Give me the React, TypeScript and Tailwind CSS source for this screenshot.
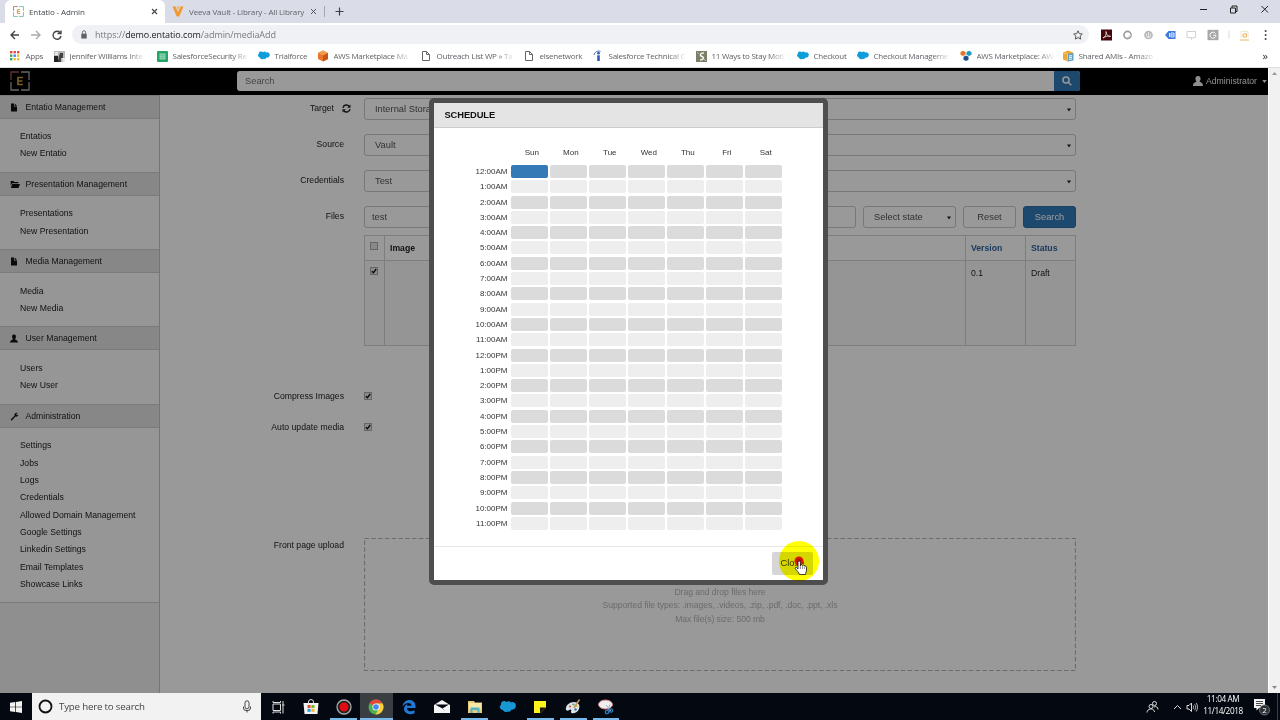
import type { ReactNode } from 'react';
import clsx from 'clsx';

interface MenuGroup {
  title: string;
  icon: 'file' | 'folder' | 'user' | 'wrench';
  items: string[];
}

interface Bookmark {
  label: string;
  width: string;
  icon: ReactNode;
  fade?: boolean;
}

const menu: MenuGroup[] = [
  { title: 'Entatio Management', icon: 'file', items: ['Entatios', 'New Entatio'] },
  { title: 'Presentation Management', icon: 'folder', items: ['Presentations', 'New Presentation'] },
  { title: 'Media Management', icon: 'file', items: ['Media', 'New Media'] },
  { title: 'User Management', icon: 'user', items: ['Users', 'New User'] },
  {
    title: 'Administration',
    icon: 'wrench',
    items: [
      'Settings',
      'Jobs',
      'Logs',
      'Credentials',
      'Allowed Domain Management',
      'Google Settings',
      'Linkedin Settings',
      'Email Templates',
      'Showcase Links',
    ],
  },
];

const days = ['Sun', 'Mon', 'Tue', 'Wed', 'Thu', 'Fri', 'Sat'];
const hours = Array.from({ length: 24 }, (_, h) => `${h % 12 || 12}:00${h < 12 ? 'AM' : 'PM'}`);

const SalesforceCloud = () => (
  <svg viewBox="0 0 16 12" className="-mt-0.5 h-[9px] w-3">
    <path d="M6.5 1.6A3.3 3.3 0 0 1 11 2a3.4 3.4 0 0 1 4.7 3.3A3.4 3.4 0 0 1 11.5 8.7 3 3 0 0 1 7.6 10.3 3.6 3.6 0 0 1 2.5 8.5 2.8 2.8 0 0 1 1 3.7 3.2 3.2 0 0 1 6.5 1.6Z" fill="#0d9dda" />
  </svg>
);

const PageIcon = () => (
  <svg viewBox="0 0 12 12" className="size-3" fill="none" stroke="#666" strokeWidth="1">
    <path d="M2.5 1.5H6.5L9.5 4.5V10.5H2.5ZM6.5 1.5V4.5H9.5" />
  </svg>
);

const AppsIcon = () => (
  <svg viewBox="0 0 10 10" className="size-[10px]">
    {['#e8453c', '#e8453c', '#e8453c', '#3aa757', '#4285f4', '#f9bb2d', '#3aa757', '#f9bb2d', '#f9bb2d'].map((c, i) => (
      <rect key={i} x={(i % 3) * 3.5} y={Math.floor(i / 3) * 3.5} width="2.4" height="2.4" fill={c} />
    ))}
  </svg>
);

const PhotoIcon = () => (
  <svg viewBox="0 0 11 11" className="size-[11px]">
    <path d="M0 0H11V11H0Z" fill="#b9b9b9" />
    <path d="M0 5H4L5 11H0Z" fill="#222" />
    <path d="M6 2H9V7H7V11H5V5Z" fill="#444" />
    <path d="M1 1H4V4H1ZM8 7H11V11H9Z" fill="#e8e8e8" />
  </svg>
);

const SheetIcon = () => (
  <svg viewBox="0 0 11 11" className="size-[11px]">
    <rect width="11" height="11" rx="1" fill="#23a566" />
    <path d="M2.5 2.5H8.5V8.5H2.5Z" fill="#8ed1b1" />
    <path d="M2.5 4.5H8.5M2.5 6.5H8.5M5.5 2.5V8.5" stroke="#58b98b" strokeWidth=".5" />
  </svg>
);

const AwsCubeIcon = () => (
  <svg viewBox="0 0 12 12" className="size-3">
    <path d="M6 .5L11 3V9L6 11.5 1 9V3Z" fill="#e8762c" />
    <path d="M6 .5L11 3 6 5.5 1 3Z" fill="#f49a4b" />
    <path d="M6 5.5L11 3V9L6 11.5Z" fill="#c85515" />
  </svg>
);

const IndeedIcon = () => (
  <svg viewBox="0 0 12 12" className="size-3">
    <circle cx="6.5" cy="3.2" r="1.4" fill="#2f5bb5" />
    <path d="M5.2 5.3H7.8V11H5.2Z" fill="#2f5bb5" />
    <path d="M2 5C3 1.5 6 .3 8.5 1.5" stroke="#2f5bb5" fill="none" strokeWidth=".9" />
  </svg>
);

const LeafIcon = () => (
  <svg viewBox="0 0 11 11" className="size-[11px]">
    <rect width="11" height="11" fill="#7c8069" />
    <path d="M8 2C4 1.5 3.5 4.5 6 5.5S7.5 9 4 9" stroke="#f4f4ee" strokeWidth="1.5" fill="none" />
    <path d="M1 1L3 3M8 8L10 10" stroke="#c8c8bc" strokeWidth=".8" />
  </svg>
);

const MarketIcon = () => (
  <svg viewBox="0 0 12 12" className="size-3">
    <path d="M3 .8L5.5 2V4.8L3 6 .5 4.8V2Z" fill="#e47427" />
    <path d="M9 .8L11.5 2V4.8L9 6 6.5 4.8V2Z" fill="#1c9ac0" />
    <path d="M6 5.5L8.5 6.8V9.7L6 11 3.5 9.7V6.8Z" fill="#1c4f8c" />
  </svg>
);

const AmiIcon = () => (
  <svg viewBox="0 0 12 12" className="size-3">
    <path d="M1 2.5L6 .5 11 2.5V9.5L6 11.5 1 9.5Z" fill="#f0a733" />
    <path d="M5.5 4L11.5 3V10.5L5.5 11.5Z" fill="#5ea0c8" />
    <path d="M7 6L10 5.6M7 7.5L10 7.2M7 9.3L10 9" stroke="#fff" strokeWidth=".9" />
    <path d="M1 2.5L5.5 4V11.2" stroke="#f9d48b" strokeWidth=".7" fill="none" />
  </svg>
);

const bookmarks: Bookmark[] = [
  { label: 'Apps', width: 'w-11', icon: <AppsIcon /> },
  { label: 'Jennifer Williams Inte', width: 'w-[103px]', icon: <PhotoIcon />, fade: true },
  { label: 'SalesforceSecurity Re', width: 'w-[102px]', icon: <SheetIcon />, fade: true },
  { label: 'Trialforce', width: 'w-[59px]', icon: <SalesforceCloud /> },
  { label: 'AWS Marketplace Ma', width: 'w-[103px]', icon: <AwsCubeIcon />, fade: true },
  { label: 'Outreach List WP » Ta', width: 'w-[103px]', icon: <PageIcon />, fade: true },
  { label: 'elsenetwork', width: 'w-[69px]', icon: <PageIcon /> },
  { label: 'Salesforce Technical C', width: 'w-[103px]', icon: <IndeedIcon />, fade: true },
  { label: '11 Ways to Stay Moti', width: 'w-[102px]', icon: <LeafIcon />, fade: true },
  { label: 'Checkout', width: 'w-[60px]', icon: <SalesforceCloud /> },
  { label: 'Checkout Manageme', width: 'w-[103px]', icon: <SalesforceCloud />, fade: true },
  { label: 'AWS Marketplace: AW', width: 'w-[102px]', icon: <MarketIcon />, fade: true },
  { label: 'Shared AMIs - Amazo', width: 'w-[103px]', icon: <AmiIcon />, fade: true },
];

function EntatioMark({ className, corner }: { className: string; corner: string }) {
  return (
    <svg viewBox="0 0 20 20" className={className} fill="none" strokeWidth="1.3">
      <path d="M1 9V1H9" stroke="#9c5a4c" />
      <path d="M11 1H19V9M19 11V19H11M9 19H1V11" stroke={corner} />
      <path d="M13 6.5H8V13.5H13M8 10H12.5" stroke="#c99a3a" strokeWidth="1.7" />
    </svg>
  );
}

function BrowserChrome() {
  return (
    <header className="h-[68px] shrink-0 bg-white font-['Open_Sans',sans-serif] text-[8px] text-[#5f6368]">
      <div className="flex h-[23px] items-stretch bg-[#dadde8] pl-[5px]">
        <div className="flex w-40 items-center rounded-t-md bg-white pl-2 pr-[7px]">
          <EntatioMark className="size-[11px]" corner="#58aaa0" />
          <span className="ml-[5px] grow tracking-[-0.1px] text-[#45494d]">Entatio - Admin</span>
          <svg viewBox="0 0 7 7" className="size-[7px]" stroke="#444" strokeWidth="1.1">
            <path d="M1 1L6 6M6 1L1 6" />
          </svg>
        </div>
        <div className="my-[6px] flex w-40 items-center border-r border-[#a3a7b0] pl-[7px] pr-[7px]">
          <svg viewBox="0 0 12 11" className="h-[11px] w-3 shrink-0">
            <path d="M.5.5H3.5L6 6 8.5.5H11.5L7.3 10.5H4.7Z" fill="#f09a35" />
            <path d="M4.5.5H7.5L6 4Z" fill="#f6b25c" />
          </svg>
          <span className="ml-[5px] grow whitespace-nowrap tracking-[-0.14px]">Veeva Vault - Library - All Library</span>
          <svg viewBox="0 0 7 7" className="size-[7px] shrink-0" stroke="#555" strokeWidth="1">
            <path d="M1 1L6 6M6 1L1 6" />
          </svg>
        </div>
        <svg viewBox="0 0 9 9" className="ml-[10px] mt-[7px] size-[9px]" stroke="#3c4043" strokeWidth="1.2">
          <path d="M4.5.5V8.5M.5 4.5H8.5" />
        </svg>
        <div className="ml-auto flex items-start pt-[5px]">
          <svg viewBox="0 0 76 10" className="mr-[7px] h-[10px] w-[76px]" fill="none" stroke="#222" strokeWidth="1">
            <path d="M3 4.5H10" />
            <path d="M34.5 3.5H39.5V8.5H34.5ZM36 3.5V1.5H41V7H39.5" transform="translate(-1 -.5)" />
            <path d="M64.5 1L71 7.5M71 1L64.5 7.5" />
          </svg>
        </div>
      </div>
      <div className="flex h-[22px] items-center pt-px">
        <svg viewBox="0 0 52 12" className="ml-[10px] h-3 w-[52px]" fill="none" strokeWidth="1.4">
          <path d="M9 6H1M5 2L1 6 5 10" stroke="#444" />
          <path d="M21 6H30M26 2L30 6 26 10" stroke="#aaa" />
          <path d="M50 3.5A4 4 0 1 0 51 7M51 1.5V4.5H47.5" stroke="#444" />
        </svg>
        <div className="ml-[10px] flex h-[19px] w-[1017px] items-center rounded-full bg-[#f0f1f4] pl-2">
          <svg viewBox="0 0 8 10" className="h-[9px] w-2">
            <path d="M1 4H7V9.5H1Z" fill="#5f6368" />
            <path d="M2.300 4V2.5a1.7 1.7 0 0 1 3.4 0V4" fill="none" stroke="#5f6368" />
          </svg>
          <span className="ml-[7px] text-[9px] tracking-[-0.07px] text-[#767a7f]">
            https://<span className="text-[#202124]">demo.entatio.com</span>/admin/mediaAdd
          </span>
          <svg viewBox="0 0 10 10" className="ml-auto mr-[6px] size-[10px]" fill="none" stroke="#555" strokeWidth="1">
            <path d="M5 .8L6.3 3.6 9.3 4 7.1 6.1 7.7 9.1 5 7.6 2.3 9.1 2.9 6.1.7 4 3.7 3.6Z" />
          </svg>
        </div>
        <svg viewBox="0 0 180 12" className="ml-2 h-3 w-[180px] shrink-0">
          <path d="M4 .5H15V11.5H4Z" fill="#45080c" />
          <path d="M6 9C8.5 8 9.5 5 9 2.500 9.5 6 11 7.5 13.5 7.3 11 6.8 8 7.5 6 9Z" fill="none" stroke="#eee" strokeWidth=".8" />
          <circle cx="30.5" cy="6" r="3.6" fill="none" stroke="#9a9a9a" strokeWidth="1.6" />
          <path d="M31 8L34 6" stroke="#ddd" strokeWidth="1.5" />
          <circle cx="51.5" cy="6" r="4.3" fill="#b8b8b8" />
          <path d="M49.5 4.5V6.5a2 2 0 0 0 4 0V4.5M51.5 3V9" stroke="#f4f4f4" fill="none" strokeWidth=".8" />
          <path d="M68 6L71.5 2H78.5V10H71.5Z" fill="#3f79dd" />
          <path d="M72.5 4V8M74 4H77V8H74ZM74 6H77" stroke="#fff" strokeWidth=".8" fill="none" />
          <path d="M90 2.5H98.5V8.5H96L94.5 10.5V8.5H90Z" fill="none" stroke="#d2d2d6" />
          <path d="M110.5.8H121.5V11.2H110.5Z" fill="#a8a8a8" />
          <path d="M118.500 4.5A3 3 0 1 0 118.8 7.3V6.2H116.3" fill="none" stroke="#fff" />
          <path d="M132 2V10" stroke="#ddd" />
          <path d="M144 9V2.5H151V9" fill="none" stroke="#f2e7d2" />
          <path d="M143 11H152M146 5H149.5V8H146Z" stroke="#edb765" fill="none" />
          <circle cx="168.6" cy="2" r="1" fill="#444" />
          <circle cx="168.6" cy="6" r="1" fill="#444" />
          <circle cx="168.6" cy="10" r="1" fill="#444" />
        </svg>
      </div>
      <div className="flex h-[23px] items-center border-b border-[#ddd] pl-[8.500px]">
        {bookmarks.map((b) => (
          <div key={b.label} className={clsx('flex shrink-0 items-center', b.width)}>
            <span className="flex w-[13px] shrink-0 justify-center">{b.icon}</span>
            <span
              className={clsx(
                'ml-1 whitespace-nowrap tracking-[-0.25px]',
                b.fade && '[mask-image:linear-gradient(to_right,black_80%,rgba(0,0,0,0.15))]',
              )}
            >
              {b.label}
            </span>
          </div>
        ))}
        <span className="-mt-0.5 ml-auto mr-3 text-[11px] leading-none text-[#333]">»</span>
      </div>
    </header>
  );
}

function NavBar() {
  return (
    <nav className="flex h-[26.5px] shrink-0 items-center bg-black pl-[10px] text-[#eee]">
      <EntatioMark className="size-5" corner="#aaa" />
      <div className="ml-[207px] flex h-5 w-[843px] overflow-hidden rounded-[3px] bg-white">
        <span className="grow self-center pl-2 pt-[2px] text-[9.33px] text-[#777]">Search</span>
        <span className="flex w-[26px] items-center justify-center bg-[#337ab7]">
          <svg viewBox="0 0 10 10" className="size-[10px]" fill="none" stroke="#fff" strokeWidth="1.5">
            <circle cx="4" cy="4" r="3" />
            <path d="M6.2 6.2L9.3 9.3" />
          </svg>
        </span>
      </div>
      <div className="ml-auto mr-[1px] flex items-center">
        <svg viewBox="0 0 10 10" className="size-[10px]" fill="#eee">
          <path d="M5 0C7 0 7.8 1.3 7.5 3.2 7.3 4.6 6.7 5 6.5 5.6 7 6.5 10 6.3 10 10H0C0 6.3 3 6.5 3.5 5.6 3.3 5 2.7 4.6 2.5 3.2 2.2 1.3 3 0 5 0Z" />
        </svg>
        <span className="ml-[3px]">Administrator</span>
        <svg viewBox="0 0 6 4" className="ml-[5px] h-[3px] w-[5px]" fill="#eee">
          <path d="M0 0H6L3 4Z" />
        </svg>
      </div>
    </nav>
  );
}

function MenuIcon({ name }: { name: MenuGroup['icon'] }) {
  return (
    <svg viewBox="0 0 10 9" className="h-[9px] w-[10px]" fill="#111">
      {name === 'file' && <path d="M1 .5H4V3.5H7V8.5H1ZM4.7.5L7 2.9H4.7Z" />}
      {name === 'folder' && <path d="M.7 4V1H3.5L4.3 2H8.3V3.3H2L.7 6ZM2.3 4H10L8.5 8H.8Z" />}
      {name === 'user' && (
        <path d="M4 .5C5.6.5 6 1.6 5.9 3 5.7 4.4 5.2 4.6 5.2 5.200 5.4 6.3 8 6 8 8.5H0C0 6 2.6 6.3 2.8 5.2 2.8 4.6 2.3 4.4 2.1 3 2 1.6 2.4.5 4 .5Z" />
      )}
      {name === 'wrench' && <path d="M7.6 1L6.2 2.3 6.7 3.2 8.2 2.5C8.3 4.1 7 5 5.5 4.6L2 8.3C1.4 8.8.4 8 .9 7.2L4.5 3.7C4.2 2 5.7.4 7.6 1Z" />}
    </svg>
  );
}

function Sidebar() {
  return (
    <aside className="w-40 shrink-0 border-r border-[#c4c4c4] bg-[#eee]">
      {menu.map((group) => (
        <section key={group.title}>
          <h2 className="flex h-6 items-center border-y border-[#cbcbcb] bg-[#e1e1e1] pl-[10px] pt-px">
            <MenuIcon name={group.icon} />
            <span className="ml-[5.5px]">{group.title}</span>
          </h2>
          <ul className="bg-[#fafafa] pb-[9px] pl-5 pt-[9.64px] leading-[17.33px]">
            {group.items.map((item) => (
              <li key={item}>{item}</li>
            ))}
          </ul>
        </section>
      ))}
      <div className="border-t border-[#cbcbcb]" />
    </aside>
  );
}

function SelectArrow() {
  return (
    <svg viewBox="0 0 5 4" className="h-[4px] w-[4px]" fill="#222">
      <path d="M0 0H5L2.5 4Z" />
    </svg>
  );
}

function Check({ checked }: { checked?: boolean }) {
  return (
    <span className="flex size-2 items-center justify-center border border-[#aaa] bg-[#e6e6e6]">
      {checked && (
        <svg viewBox="0 0 6 6" className="size-[6px] shrink-0" fill="none" stroke="#111" strokeWidth="1.4">
          <path d="M.8 3.2L2.4 4.8 5.2 1" />
        </svg>
      )}
    </span>
  );
}

function FormRow({ label, children, className }: { label: ReactNode; children: ReactNode; className?: string }) {
  return (
    <div className={clsx('flex', className)}>
      <div className="flex w-[184px] shrink-0 justify-end pt-[4px] leading-[13px]">{label}</div>
      <div className="ml-5 w-[712px]">{children}</div>
    </div>
  );
}

const field = 'flex h-[22.5px] items-center rounded-[3px] border border-[#c8c8c8] bg-white pt-[1.5px] text-[9.33px] text-[#555]';

function MediaForm() {
  return (
    <main className="grow bg-white pt-[3px]">
      {[
        ['Target', 'Internal Storage'],
        ['Source', 'Vault'],
        ['Credentials', 'Test'],
      ].map(([label, value]) => (
        <FormRow
          key={label}
          className="mb-[13.5px]"
          label={
            <>
              {label}
              {label === 'Target' && (
                <svg viewBox="0 0 9 9" className="-mr-[7px] ml-2 mt-[2px] size-[9px]" fill="none" stroke="#222" strokeWidth="1.4">
                  <path d="M1 3.8A3.4 3.4 0 0 1 7.2 2.500M8 5.2A3.4 3.4 0 0 1 1.8 6.5" />
                  <path d="M8.5.5V3.8H5.2ZM.5 8.5V5.2H3.8Z" fill="#222" stroke="none" />
                </svg>
              )}
            </>
          }
        >
          <div className={clsx(field, 'justify-between pl-[10px] pr-1')}>
            {value}
            <SelectArrow />
          </div>
        </FormRow>
      ))}

      <FormRow label="Files" className="mb-[7px]">
        <div className="flex gap-[7px]">
          <div className={clsx(field, 'w-[492px] pl-[7px]')}>test</div>
          <div className={clsx(field, 'w-[93px] justify-between pl-[10px] pr-1')}>
            Select state
            <SelectArrow />
          </div>
          <div className={clsx(field, 'w-[53px] justify-center text-[#333]')}>Reset</div>
          <div className="flex w-[53px] items-center justify-center rounded-[3px] border border-[#2e6da4] bg-[#337ab7] pt-[1.5px] text-[9.33px] text-white">
            Search
          </div>
        </div>
      </FormRow>

      <div className="ml-[204px] grid w-[712px] grid-cols-[20px_581px_60px_50px] grid-rows-[25px_85px] border-l border-t border-[#d0d0d0] *:border-b *:border-r *:border-[#d0d0d0] *:pl-[5px] *:pt-[5.5px]">
        <div><Check /></div>
        <div className="font-bold">Image</div>
        <div className="font-bold text-[#2f64a0]">Version</div>
        <div className="font-bold text-[#2f64a0]">Status</div>
        <div className="bg-[#f9f9f9]"><Check checked /></div>
        <div className="bg-[#f9f9f9]" />
        <div className="bg-[#f9f9f9]">0.1</div>
        <div className="bg-[#f9f9f9]">Draft</div>
      </div>

      <FormRow label="Compress Images" className="mt-[40px] h-[31px]">
        <div className="pt-[6px]"><Check checked /></div>
      </FormRow>
      <FormRow label="Auto update media" className="h-[118px]">
        <div className="pt-[6px]"><Check checked /></div>
      </FormRow>

      <FormRow label="Front page upload">
        <svg viewBox="0 0 712 133" className="-mb-[135px] mt-[3px] block h-[133px] w-[712px]" fill="none">
          <rect x=".5" y=".5" width="711" height="132" stroke="#b4b4b4" strokeWidth="1.2" strokeDasharray="4.5 2.3" />
        </svg>
        <div className="pt-[50px] text-center leading-[13.3px] tracking-[-0.07px] text-[#b4b4b4]">
          <p>Drag and drop files here</p>
          <p>Supported file types: .images, .videos, .zip, .pdf, .doc, .ppt, .xls</p>
          <p>Max file(s) size: 500 mb</p>
        </div>
      </FormRow>
    </main>
  );
}

function ScheduleDialog() {
  return (
    <div className="absolute left-[429px] top-[98px] flex h-[487px] w-[399px] flex-col rounded-[5px] border-[5px] border-[#4e4e4e] bg-white text-[8px]">
      <h1 className="flex h-[24.5px] shrink-0 items-center border-b border-[#ccc] bg-[#e4e4e4] pl-[10.5px] pt-[3px] text-[9.33px] font-bold tracking-[-0.1px] text-[#111]">
        SCHEDULE
      </h1>
      <div className="grid grid-cols-[73px_repeat(7,37px)] gap-x-[2px] pl-[2.3px] pt-[18px] text-[#333]">
        <span />
        {days.map((d) => (
          <span key={d} className="h-[19.5px] pl-1 text-center leading-[13px]">{d}</span>
        ))}
      </div>
      <div className="grid grid-cols-[73px_repeat(7,37px)] gap-x-[2px] pl-[2.3px] text-[#333]">
        {hours.map((hour, row) => (
          <div key={hour} className="contents">
            <span className="h-[15.3px] pr-[1.8px] text-right leading-[13px]">{hour}</span>
            {days.map((d, col) => (
              <span
                key={d}
                className={clsx(
                  'h-[13px] rounded-[2px]',
                  row === 0 && col === 0 ? 'bg-[#337ab7]' : row % 2 ? 'bg-[#eee]' : 'bg-[#dbdbdb]',
                )}
              />
            ))}
          </div>
        ))}
      </div>
      <footer className="mt-auto flex h-[34px] justify-end border-t border-[#e8e8e8] pr-[10px] pt-[5px]">
        <button className="h-[23px] w-[41px] rounded-[2px] bg-[#d6d6d6] pt-px text-[9.33px] text-[#333]">Close</button>
      </footer>
    </div>
  );
}

function Pointer() {
  return (
    <>
      <div className="absolute left-[779px] top-[541px] size-10 rounded-full bg-[#ffff00] mix-blend-multiply" />
      <svg viewBox="0 0 20 24" className="absolute left-[790px] top-[554px] h-6 w-5">
        <circle cx="9" cy="7" r="4.5" fill="#e01500" />
        <circle cx="9" cy="7" r="1.8" fill="none" stroke="#8a1000" strokeWidth=".8" />
        <path
          d="M8 15V8.2a1.2 1.2 0 0 1 2.4 0V12l.3-.8a1 1 0 0 1 1.9.4l.5-.2a1 1 0 0 1 1.7.7l.5-.1c.8 0 1.2.5 1.2 1.3V16c0 1.5-.8 2.3-1 4.5H9.5C9 18.5 6.5 16.5 5.3 14.5 4.9 13.3 6.5 13 7.2 14Z"
          fill="#fff"
          stroke="#111"
          strokeWidth=".8"
        />
        <path d="M10.4 12V15M12.6 12V15M14.6 12.5V15" stroke="#333" strokeWidth=".5" />
      </svg>
    </>
  );
}

const tasks: { open?: boolean; active?: boolean; icon: ReactNode }[] = [
  {
    icon: <path d="M3 5H10.5V11.5H3ZM3 2V3.5H10.5V2M3 14.5V13H10.5V14.5M13 2V14.5M12 6H14.5" stroke="#ddd" fill="none" />,
  },
  {
    icon: (
      <>
        <path d="M5.5 4.5V3a2.5 2.5 0 0 1 5 0V4.5" stroke="#ddd" fill="none" />
        <path d="M.5 4H15.5L14.5 15H1.5Z" fill="#f3f3f3" />
        <path d="M4.5 6H7.6V9H4.5Z" fill="#e5532d" />
        <path d="M8.4 6H11.5V9H8.4Z" fill="#7db52c" />
        <path d="M4.5 9.8H7.6V12.8H4.5Z" fill="#2a9ddb" />
        <path d="M8.4 9.8H11.5V12.8H8.4Z" fill="#f5b321" />
      </>
    ),
  },
  {
    open: true,
    icon: (
      <>
        <circle cx="8" cy="8" r="7" fill="#222" stroke="#aaa" strokeWidth="1.3" />
        <circle cx="8" cy="8" r="4.5" fill="#e30b12" />
      </>
    ),
  },
  {
    open: true,
    active: true,
    icon: (
      <>
        <circle cx="8" cy="8" r="7.5" fill="#4caf50" />
        <path d="M8 8L1.500 4.2A7.5 7.5 0 0 1 14.5 4.5H8Z" fill="#e3463b" />
        <path d="M8 4.5H14.6A7.5 7.5 0 0 1 7.5 15.5L11 9.5Z" fill="#fccd3c" />
        <circle cx="8" cy="8" r="3.6" fill="#fff" />
        <circle cx="8" cy="8" r="2.8" fill="#4688f1" />
      </>
    ),
  },
  {
    icon: (
      <path
        d="M1.5 7.5C2 3.5 5 1 8.5 1 12.5 1 14.5 4 14.5 7.5V9H6C6 12.8 10.5 13 13.5 11.3V14.2C9 16.3 3 15 3 9.8 3 7.5 4.5 5.8 6.5 5 6 5.7 5.9 6.3 5.9 6.8H10.5C10.5 3 4.5 3 1.5 7.5Z"
        fill="#2279d3"
      />
    ),
  },
  {
    icon: (
      <>
        <path d="M0 6L8 1 16 6V14H0Z" fill="#f5f5f5" />
        <path d="M1 5.5H15L8.5 9.5ZM8 9L12 12.5 8.5 9.8Z" fill="#05080f" />
      </>
    ),
  },
  {
    open: true,
    icon: (
      <>
        <path d="M1 2H7L8 3.5H15V14H1Z" fill="#e9ca79" />
        <path d="M2 4H14V10H2Z" fill="#f8e7a7" />
        <path d="M3.5 14V8.5H12.5V14H10.5V11H5.5V14Z" fill="#53b3c7" />
      </>
    ),
  },
  {
    icon: (
      <path d="M6.5 3A3.3 3.3 0 0 1 11 3.5 3.2 3.2 0 0 1 15.7 7 3.3 3.3 0 0 1 11.5 10.5 3.2 3.2 0 0 1 7.6 12.5 3.6 3.6 0 0 1 2.8 11 3 3 0 0 1 1 5.7 3.2 3.2 0 0 1 6.5 3Z" fill="#1798d5" />
    ),
  },
  {
    open: true,
    icon: (
      <>
        <path d="M2 2H14V14H2Z" fill="#fdf51b" />
        <path d="M8 8.5H14L8.5 14H8Z" fill="#17180c" />
        <path d="M14 8.5V14H8.5Z" fill="#05080f" />
      </>
    ),
  },
  {
    open: true,
    icon: (
      <>
        <path d="M1 11C0 6 5 3 9 3 13 3 15.5 6 14 10 12.5 14 8 15 6.5 14 5 12.5 7.5 11 5.5 10.5 4 10.5 3 13 1 11Z" fill="#dbe5e8" />
        <circle cx="5" cy="7.5" r="1.1" fill="#d7503c" />
        <circle cx="8.5" cy="5.5" r="1.1" fill="#5aa74c" />
        <circle cx="11.5" cy="7" r="1.1" fill="#e5b93a" />
        <circle cx="10.5" cy="10.5" r="1.2" fill="#3b79b8" />
        <path d="M9 9L14.5.5" stroke="#c59a63" strokeWidth="1.5" />
      </>
    ),
  },
  {
    open: true,
    icon: (
      <>
        <ellipse cx="7.5" cy="5.5" rx="7" ry="4.500" fill="#eee" stroke="#d97a80" strokeWidth="1" />
        <path d="M8 6L13 12M12 5.5L9.5 12" stroke="#9fb6c6" />
        <circle cx="9" cy="13" r="1.7" fill="none" stroke="#2e7cbc" strokeWidth="1.3" />
        <circle cx="13" cy="11.5" r="1.7" fill="none" stroke="#2e7cbc" strokeWidth="1.3" />
      </>
    ),
  },
];

function Taskbar() {
  return (
    <footer className="flex h-[27px] shrink-0 bg-[#040810] font-['Open_Sans',sans-serif] text-white">
      <div className="flex w-8 items-center justify-center">
        <svg viewBox="0 0 12 12" className="size-3" fill="#f3f3f3">
          <path d="M0 1.8L5.3 1V5.7H0ZM6 .9L12 0V5.7H6ZM0 6.3H5.3V11L0 10.2ZM6 6.3H12V12L6 11.1Z" />
        </svg>
      </div>
      <div className="flex w-[229px] items-center bg-[#f2f2f2] pl-[6px] pr-[9px]">
        <svg viewBox="0 0 15 15" className="size-[15px]">
          <circle cx="7.5" cy="7.5" r="6" fill="none" stroke="#111" strokeWidth="1.8" />
        </svg>
        <span className="ml-[6px] grow pt-px text-[9.7px] tracking-[-0.18px] text-[#444]">Type here to search</span>
        <svg viewBox="0 0 10 13" className="h-[13px] w-[10px]" fill="none" stroke="#333" strokeWidth=".9">
          <rect x="3" y=".8" width="4" height="8" rx="2" />
          <path d="M1.5 6.5V8a2.5 2.500 0 0 0 2.5 2.5H6A2.5 2.5 0 0 0 8.5 8V6.5M5 10.5V12.5" />
        </svg>
      </div>
      <div className="flex pl-[0.6px]">
        {tasks.map((task, i) => (
          <div
            key={i}
            className={clsx(
              'flex items-center justify-center',
              task.open && 'shadow-[inset_0_-2px_0_#76b9ed]',
              task.active && 'bg-[#3a3e43]',
              task.open && !task.active ? 'mx-[3px] w-[26.8px]' : 'w-[32.8px]',
            )}
          >
            <svg viewBox="0 0 16 16" className="size-4">{task.icon}</svg>
          </div>
        ))}
      </div>
      <div className="ml-auto flex items-center">
        <svg viewBox="0 0 52 14" className="mr-px h-[14px] w-[52px]" fill="none" stroke="#ddd" strokeWidth="1">
          <circle cx="5" cy="6.5" r="2" />
          <path d="M1 12.5C1 8 8.5 8 8.5 12" />
          <circle cx="8.5" cy="3.5" r="2" />
          <path d="M8 7C10 6 12 7 12 9.5" />
          <path d="M28 9L31.5 5.5 35 9" />
          <path d="M41 5.5H43L45.5 3V11.5L43 9H41Z" />
          <path d="M47 5.5C47.8 6.5 47.8 8 47 9M48.6 4.3C50 6 50 8.5 48.6 10.2M50.2 3C52 5.5 52 9 50.2 11.5" strokeWidth=".8" />
        </svg>
        <div className="-mt-[3px] ml-[3px] w-[42px] whitespace-nowrap text-center text-[8.2px] leading-[12px] tracking-[-0.4px]">
          <p>11:04 AM</p>
          <p>11/14/2018</p>
        </div>
        <svg viewBox="0 0 18 18" className="ml-[9px] mr-[6px] h-[18px] w-[18px]">
          <path d="M1 1H12V10H6L3.5 12.5V10H1Z" fill="#f3f3f3" />
          <path d="M3 3.5H10M3 5.5H10M3 7.5H8" stroke="#222" strokeWidth=".8" />
          <circle cx="11.5" cy="12" r="5" fill="#2b2f35" stroke="#888" strokeWidth=".8" />
          <text x="11.5" y="15" fontSize="8" textAnchor="middle" fill="#fff">2</text>
        </svg>
        <span className="mr-[2px] h-full w-px bg-[#3a3f47]" />
      </div>
    </footer>
  );
}

function ScrollBar() {
  return (
    <div className="flex w-3 shrink-0 flex-col items-center justify-between border-l border-white bg-[#f1f1f1] pb-1 pt-1">
      <svg viewBox="0 0 5 3" className="h-[3px] w-[5px]" fill="#999">
        <path d="M0 3H5L2.5 0Z" />
      </svg>
      <svg viewBox="0 0 5 3" className="h-[3px] w-[5px]" fill="#888">
        <path d="M0 0H5L2.5 3Z" />
      </svg>
    </div>
  );
}

export default function App() {
  return (
    <div className="relative flex h-[720px] w-[1280px] flex-col overflow-hidden bg-white">
      <BrowserChrome />
      <div className="flex min-h-0 grow font-['Liberation_Sans',Arial,sans-serif] text-[8.67px] leading-normal text-[#222]">
        <div className="relative flex min-w-0 grow flex-col overflow-hidden">
          <NavBar />
          <div className="flex min-h-0 grow">
            <Sidebar />
            <MediaForm />
          </div>
          <div className="absolute inset-0 bg-black/40" />
        </div>
        <ScrollBar />
      </div>
      <Taskbar />
      <div className="font-['Liberation_Sans',Arial,sans-serif]">
        <ScheduleDialog />
      </div>
      <Pointer />
    </div>
  );
}
